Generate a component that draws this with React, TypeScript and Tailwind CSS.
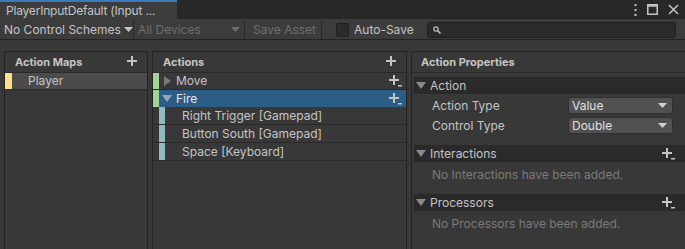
import React from "react";

const font = { fontFamily: "Inter, 'Noto Sans', sans-serif" };

function Plus({ sub = false, className = "" }: { sub?: boolean; className?: string }) {
  return (
    <svg width="13" height="12" viewBox="0 0 13 12" className={className}>
      <rect x="4" y="0" width="2" height="10" fill="#c4c4c4" />
      <rect x="0" y="4" width="10" height="2" fill="#c4c4c4" />
      {sub && <rect x="9" y="10" width="4" height="1.5" fill="#c4c4c4" />}
    </svg>
  );
}

function TriRight({ color }: { color: string }) {
  return (
    <svg width="9" height="10" viewBox="0 0 9 10">
      <polygon points="1,0 8,5 1,10" fill={color} />
    </svg>
  );
}

function TriDown({ color }: { color: string }) {
  return (
    <svg width="10" height="9" viewBox="0 0 10 9">
      <polygon points="0,1 10,1 5,8" fill={color} />
    </svg>
  );
}

function SmallDown({ color = "#c4c4c4" }: { color?: string }) {
  return (
    <svg width="9" height="6" viewBox="0 0 9 6">
      <polygon points="0,0 9,0 4.5,5" fill={color} />
    </svg>
  );
}

function Foldout({ title, plus }: { title: string; plus?: boolean }) {
  return (
    <div className="h-[17px] bg-[#2a2a2a] flex items-center pl-[2px] pr-[10px]">
      <TriDown color="#8a8a8a" />
      <span className="ml-[4px] text-[12px] text-[#c4c4c4] flex-1 leading-none">{title}</span>
      {plus && <Plus sub />}
    </div>
  );
}

function Dropdown({ value }: { value: string }) {
  return (
    <div className="w-[105px] h-[17px] bg-[#515151] border border-[#303030] rounded-[3px] flex items-center pl-[3px] pr-[5px]">
      <span className="flex-1 text-[12px] text-[#e0e0e0] leading-none">{value}</span>
      <SmallDown color="#d0d0d0" />
    </div>
  );
}

export default function App() {
  return (
    <div className="w-[685px] h-[249px] overflow-hidden bg-[#383838] flex flex-col" style={font}>
      {/* Tab bar */}
      <div className="h-[19px] bg-[#282828] flex shrink-0">
        <div className="w-[177px] bg-[#3c3c3c] border-t-2 border-[#3a79bb] flex items-center pl-[6px] pt-[1px]">
          <span className="text-[12px] text-[#c4c4c4] leading-none whitespace-nowrap tracking-[-0.2px]">PlayerInputDefault (Input ...</span>
        </div>
        <div className="flex-1" />
        <div className="flex items-center gap-[10px] pr-[6px]">
          <svg width="3" height="12" viewBox="0 0 3 12">
            <rect x="0.5" y="0" width="2" height="2" fill="#c4c4c4" />
            <rect x="0.5" y="5" width="2" height="2" fill="#c4c4c4" />
            <rect x="0.5" y="10" width="2" height="2" fill="#c4c4c4" />
          </svg>
          <svg width="11" height="11" viewBox="0 0 11 11">
            <rect x="0.75" y="0.75" width="9.5" height="9.5" fill="none" stroke="#c4c4c4" strokeWidth="1.5" />
            <rect x="0.75" y="0.75" width="9.5" height="2" fill="#c4c4c4" />
          </svg>
          <svg width="11" height="11" viewBox="0 0 11 11">
            <path d="M1 1 L10 10 M10 1 L1 10" stroke="#c4c4c4" strokeWidth="1.5" />
          </svg>
        </div>
      </div>

      {/* Toolbar */}
      <div className="h-[21px] bg-[#3c3c3c] border-b border-[#232323] flex items-center shrink-0 pt-[1px]">
        <div className="w-[134px] h-full flex items-center pl-[4px] pr-[4px] border-r border-[#2a2a2a]">
          <span className="text-[12px] text-[#c4c4c4] leading-none whitespace-nowrap">No Control Schemes</span>
          <span className="ml-[3px]"><SmallDown color="#c4c4c4" /></span>
        </div>
        <div className="w-[111px] h-full flex items-center pl-[4px] pr-[4px] border-r border-[#2a2a2a]">
          <span className="flex-1 text-[12px] text-[#6f6f6f] leading-none whitespace-nowrap">All Devices</span>
          <SmallDown color="#6f6f6f" />
        </div>
        <div className="w-[77px] h-full flex items-center pl-[8px] border-r border-[#2a2a2a]">
          <span className="text-[12px] text-[#6f6f6f] leading-none whitespace-nowrap">Save Asset</span>
        </div>
        <div className="ml-[14px] w-[13px] h-[14px] bg-[#2b2b2b] border border-[#202020] rounded-[2px]" />
        <span className="ml-[5px] text-[12px] text-[#c4c4c4] leading-none whitespace-nowrap">Auto-Save</span>
        <div className="ml-[13px] w-[249px] h-[16px] bg-[#2a2a2a] border border-[#1f1f1f] rounded-[3px] flex items-center pl-[5px]">
          <svg width="8" height="8" viewBox="0 0 8 8">
            <circle cx="3" cy="3" r="2.2" fill="none" stroke="#c4c4c4" strokeWidth="1.2" />
            <path d="M4.6 4.6 L7.5 7.5" stroke="#c4c4c4" strokeWidth="1.5" />
          </svg>
        </div>
      </div>

      {/* Main */}
      <div className="flex-1 flex pl-[4px] pt-[11px] gap-[4px] min-h-0">
        {/* Action Maps */}
        <div className="w-[144px] border-l border-t border-r border-[#232323] flex flex-col">
          <div className="h-[21px] flex items-center pl-[10px] pr-[7px] border-b border-[#2a2a2a]">
            <span className="flex-1 text-[11px] font-bold text-[#c4c4c4] leading-none">Action Maps</span>
            <Plus />
          </div>
          <div className="h-[17px] bg-[#4b4b4b] flex items-center border-b border-[#2c2c2c]">
            <div className="w-[7px] h-full bg-[#ffe08a]" />
            <span className="ml-[16px] text-[12px] text-[#c4c4c4] leading-none">Player</span>
          </div>
        </div>

        {/* Actions */}
        <div className="w-[255px] border-l border-t border-r border-[#232323] flex flex-col">
          <div className="h-[21px] flex items-center pl-[10px] pr-[7px] border-b border-[#2a2a2a]">
            <span className="flex-1 text-[11px] font-bold text-[#c4c4c4] leading-none">Actions</span>
            <Plus />
          </div>
          <div className="h-[17px] flex items-center border-b border-[#2a2a2a] pr-[4px]">
            <div className="w-[6px] h-full bg-[#a4d394]" />
            <span className="ml-[4px] flex"><TriRight color="#7a7a7a" /></span>
            <span className="ml-[4px] flex-1 text-[12px] text-[#c4c4c4] leading-none">Move</span>
            <Plus sub />
          </div>
          <div className="h-[17px] flex items-center bg-[#2c5d87] pr-[4px]">
            <div className="w-[6px] h-full bg-[#a4d394]" />
            <span className="ml-[3px] flex"><TriDown color="#8fa8c0" /></span>
            <span className="ml-[4px] flex-1 text-[12px] text-[#e6e6e6] leading-none">Fire</span>
            <Plus sub />
          </div>
          {["Right Trigger [Gamepad]", "Button South [Gamepad]", "Space [Keyboard]"].map((b) => (
            <div key={b} className="h-[18px] flex items-center border-b border-[#2a2a2a]">
              <div className="ml-[6px] w-[6px] h-full bg-[#8fbdbf]" />
              <span className="ml-[17px] text-[12px] text-[#c4c4c4] leading-none whitespace-nowrap">{b}</span>
            </div>
          ))}
        </div>

        {/* Properties */}
        <div className="flex-1 border-l border-t border-[#232323] flex flex-col pl-[2px]">
          <div className="h-[21px] flex items-center pl-[9px] border-b border-[#2a2a2a] -ml-[2px]">
            <span className="text-[11px] font-bold text-[#c4c4c4] leading-none">Action Properties</span>
          </div>
          <div className="mt-[4px]">
            <Foldout title="Action" />
            <div className="flex flex-col gap-[3px] mt-[3px] pl-[18px] pr-[11px]">
              <div className="flex items-center">
                <span className="w-[136px] text-[12px] text-[#c4c4c4] leading-none">Action Type</span>
                <Dropdown value="Value" />
              </div>
              <div className="flex items-center">
                <span className="w-[136px] text-[12px] text-[#c4c4c4] leading-none">Control Type</span>
                <Dropdown value="Double" />
              </div>
            </div>
          </div>
          <div className="mt-[11px]">
            <Foldout title="Interactions" plus />
            <div className="h-[25px] flex items-center pl-[18px]">
              <span className="text-[12px] text-[#7a7a7a] leading-none">No Interactions have been added.</span>
            </div>
          </div>
          <div className="mt-[7px]">
            <Foldout title="Processors" plus />
            <div className="h-[25px] flex items-center pl-[18px]">
              <span className="text-[12px] text-[#7a7a7a] leading-none">No Processors have been added.</span>
            </div>
          </div>
        </div>
      </div>
    </div>
  );
}
